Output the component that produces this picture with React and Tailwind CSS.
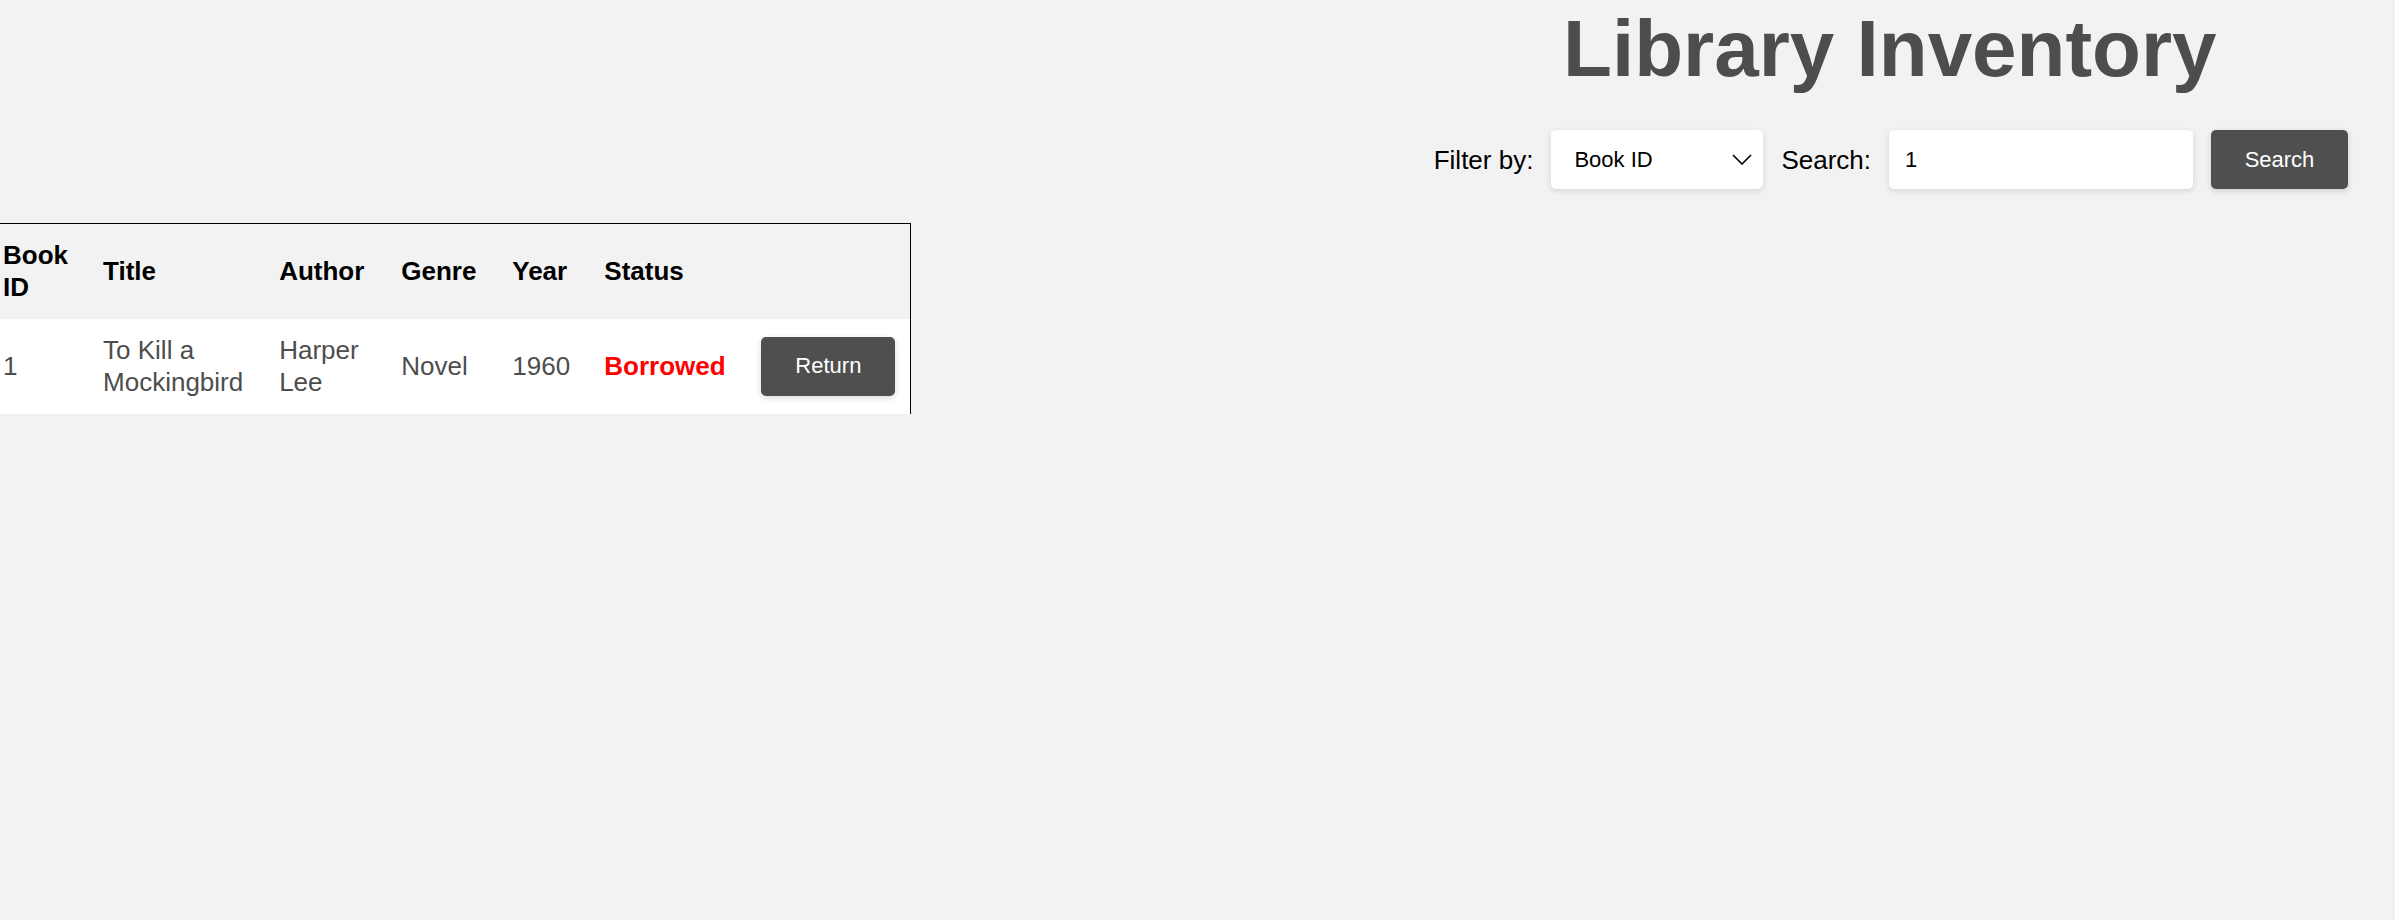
import React from 'react';

const font = { fontFamily: '"Liberation Sans", Arial, sans-serif' };

const books = [
  { id: 1, title: 'To Kill a Mockingbird', author: 'Harper Lee', genre: 'Novel', year: 1960, status: 'Borrowed' },
];

const ChevronDown = () => (
  <svg width="20" height="11" viewBox="0 0 20 11" fill="none" className="pointer-events-none">
    <path d="M1 1l9 9 9-9" stroke="#000" strokeWidth="1.6" />
  </svg>
);

export default function App() {
  return (
    <div className="min-h-screen bg-[#f2f2f2] text-black" style={font}>
      <header className="flex justify-end pr-[47px]">
        <div className="flex flex-col items-center">
          <h1 className="pt-[9px] pr-[2px] text-[80px] leading-none font-bold text-[#4d4d4d]">Library Inventory</h1>
          <div className="mt-[41px] flex items-center gap-[18px]">
            <label className="text-[26px] leading-[30px]">Filter by:</label>
            <div className="relative flex h-[59px] w-[212px] items-center rounded-[5px] bg-white pl-[23px] pr-[11px] shadow-[0_2px_6px_rgba(0,0,0,0.12)]">
              <span className="flex-1 text-[22px]">Book ID</span>
              <ChevronDown />
            </div>
            <label className="text-[26px] leading-[30px]">Search:</label>
            <input
              defaultValue="1"
              className="h-[59px] w-[304px] rounded-[5px] bg-white px-[16px] text-[22px] text-black shadow-[0_2px_6px_rgba(0,0,0,0.12)] outline-none"
              style={font}
            />
            <button className="h-[59px] w-[137px] rounded-[5px] bg-[#4f4f4f] text-[22px] text-white shadow-[0_2px_6px_rgba(0,0,0,0.15)]" style={font}>
              Search
            </button>
          </div>
        </div>
      </header>

      <table className="mt-[34px] w-[911px] table-fixed border-t border-r border-black text-left text-[26px] leading-[32px]">
        <colgroup>
          <col className="w-[86px]" />
          <col className="w-[176px]" />
          <col className="w-[122px]" />
          <col className="w-[111px]" />
          <col className="w-[92px]" />
          <col className="w-[157px]" />
          <col className="w-[166px]" />
        </colgroup>
        <thead>
          <tr className="bg-[#f2f2f2]">
            <th className="pt-[15px] pb-4 pl-[3px] pr-[17px] font-bold">Book ID</th>
            <th className="px-[17px] pt-[15px] pb-4 font-bold">Title</th>
            <th className="px-[17px] pt-[15px] pb-4 font-bold">Author</th>
            <th className="px-[17px] pt-[15px] pb-4 font-bold">Genre</th>
            <th className="px-[17px] pt-[15px] pb-4 font-bold">Year</th>
            <th className="px-[17px] pt-[15px] pb-4 font-bold">Status</th>
            <th className="px-[17px] pt-[15px] pb-4"></th>
          </tr>
        </thead>
        <tbody>
          {books.map((b) => (
            <tr key={b.id} className="bg-white text-[#4d4d4d]">
              <td className="pt-[15px] pb-4 pl-[3px] pr-[17px] align-middle">{b.id}</td>
              <td className="px-[17px] pt-[15px] pb-4 align-middle">{b.title}</td>
              <td className="px-[17px] pt-[15px] pb-4 align-middle">{b.author}</td>
              <td className="px-[17px] pt-[15px] pb-4 align-middle">{b.genre}</td>
              <td className="px-[17px] pt-[15px] pb-4 align-middle">{b.year}</td>
              <td className="px-[17px] pt-[15px] pb-4 align-middle font-bold text-[#ff0000]">{b.status}</td>
              <td className="px-[17px] pt-[15px] pb-4 align-middle">
                <button className="h-[59px] w-[134px] rounded-[5px] bg-[#4f4f4f] text-[22px] text-white shadow-[0_2px_6px_rgba(0,0,0,0.15)]" style={font}>
                  Return
                </button>
              </td>
            </tr>
          ))}
        </tbody>
      </table>
    </div>
  );
}
